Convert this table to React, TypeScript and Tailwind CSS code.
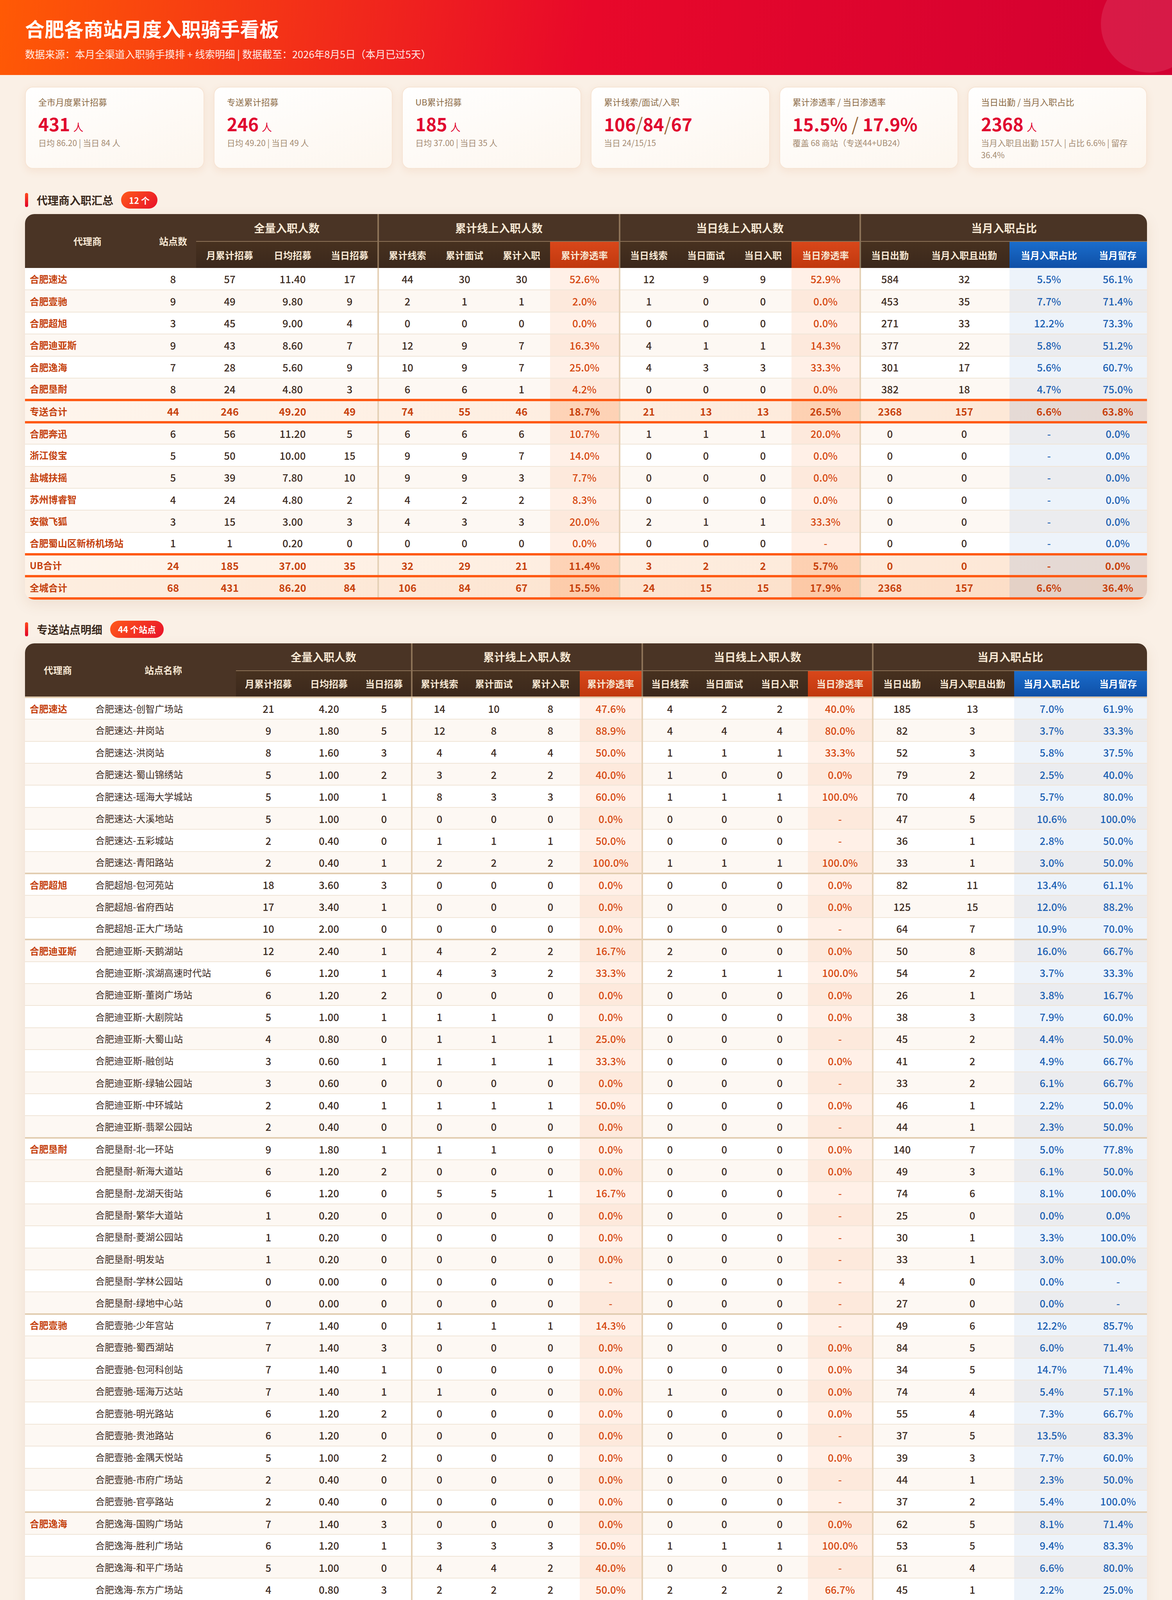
import React from "react";

type Kind = "row" | "total" | "grand";
type Row = { left: string[]; data: string[]; kind: Kind; sep?: boolean };
type LeftCol = { label: string; w: string; kind: "agency" | "site" | "num" };

const SUBS = [
  "月累计招募",
  "日均招募",
  "当日招募",
  "累计线索",
  "累计面试",
  "累计入职",
  "累计渗透率",
  "当日线索",
  "当日面试",
  "当日入职",
  "当日渗透率",
  "当日出勤",
  "当月入职且出勤",
  "当月入职占比",
  "当月留存",
];
const GROUPS: [string, number][] = [
  ["全量入职人数", 3],
  ["累计线上入职人数", 4],
  ["当日线上入职人数", 4],
  ["当月入职占比", 4],
];
const RATE = [6, 10];
const BLUE = [13, 14];
const SPLIT = [3, 7, 11];

const KPIS = [
  { label: "全市月度累计招募", value: ["431"], unit: "人", sub: "日均 86.20 | 当日 84 人" },
  { label: "专送累计招募", value: ["246"], unit: "人", sub: "日均 49.20 | 当日 49 人" },
  { label: "UB累计招募", value: ["185"], unit: "人", sub: "日均 37.00 | 当日 35 人" },
  { label: "累计线索/面试/入职", value: ["106", "/", "84", "/", "67"], unit: "", sub: "当日 24/15/15" },
  { label: "累计渗透率 / 当日渗透率", value: ["15.5%", " / ", "17.9%"], unit: "", sub: "覆盖 68 商站（专送44+UB24）" },
  { label: "当日出勤 / 当月入职占比", value: ["2368"], unit: "人", sub: "当月入职且出勤 157人 | 占比 6.6% | 留存 36.4%" },
];

const SUMMARY = [
  "合肥速达 8 57 11.40 17 44 30 30 52.6% 12 9 9 52.9% 584 32 5.5% 56.1%",
  "合肥壹驰 9 49 9.80 9 2 1 1 2.0% 1 0 0 0.0% 453 35 7.7% 71.4%",
  "合肥超旭 3 45 9.00 4 0 0 0 0.0% 0 0 0 0.0% 271 33 12.2% 73.3%",
  "合肥迪亚斯 9 43 8.60 7 12 9 7 16.3% 4 1 1 14.3% 377 22 5.8% 51.2%",
  "合肥逸海 7 28 5.60 9 10 9 7 25.0% 4 3 3 33.3% 301 17 5.6% 60.7%",
  "合肥垦耐 8 24 4.80 3 6 6 1 4.2% 0 0 0 0.0% 382 18 4.7% 75.0%",
  "T 专送合计 44 246 49.20 49 74 55 46 18.7% 21 13 13 26.5% 2368 157 6.6% 63.8%",
  "合肥奔迅 6 56 11.20 5 6 6 6 10.7% 1 1 1 20.0% 0 0 - 0.0%",
  "浙江俊宝 5 50 10.00 15 9 9 7 14.0% 0 0 0 0.0% 0 0 - 0.0%",
  "盐城扶摇 5 39 7.80 10 9 9 3 7.7% 0 0 0 0.0% 0 0 - 0.0%",
  "苏州博睿智 4 24 4.80 2 4 2 2 8.3% 0 0 0 0.0% 0 0 - 0.0%",
  "安徽飞狐 3 15 3.00 3 4 3 3 20.0% 2 1 1 33.3% 0 0 - 0.0%",
  "合肥蜀山区新桥机场站 1 1 0.20 0 0 0 0 0.0% 0 0 0 - 0 0 - 0.0%",
  "T UB合计 24 185 37.00 35 32 29 21 11.4% 3 2 2 5.7% 0 0 - 0.0%",
  "G 全城合计 68 431 86.20 84 106 84 67 15.5% 24 15 15 17.9% 2368 157 6.6% 36.4%",
];

const ZS: [string, string[]][] = [
  [
    "合肥速达",
    [
      "合肥速达-创智广场站 21 4.20 5 14 10 8 47.6% 4 2 2 40.0% 185 13 7.0% 61.9%",
      "合肥速达-井岗站 9 1.80 5 12 8 8 88.9% 4 4 4 80.0% 82 3 3.7% 33.3%",
      "合肥速达-洪岗站 8 1.60 3 4 4 4 50.0% 1 1 1 33.3% 52 3 5.8% 37.5%",
      "合肥速达-蜀山锦绣站 5 1.00 2 3 2 2 40.0% 1 0 0 0.0% 79 2 2.5% 40.0%",
      "合肥速达-瑶海大学城站 5 1.00 1 8 3 3 60.0% 1 1 1 100.0% 70 4 5.7% 80.0%",
      "合肥速达-大溪地站 5 1.00 0 0 0 0 0.0% 0 0 0 - 47 5 10.6% 100.0%",
      "合肥速达-五彩城站 2 0.40 0 1 1 1 50.0% 0 0 0 - 36 1 2.8% 50.0%",
      "合肥速达-青阳路站 2 0.40 1 2 2 2 100.0% 1 1 1 100.0% 33 1 3.0% 50.0%",
    ],
  ],
  [
    "合肥超旭",
    [
      "合肥超旭-包河苑站 18 3.60 3 0 0 0 0.0% 0 0 0 0.0% 82 11 13.4% 61.1%",
      "合肥超旭-省府西站 17 3.40 1 0 0 0 0.0% 0 0 0 0.0% 125 15 12.0% 88.2%",
      "合肥超旭-正大广场站 10 2.00 0 0 0 0 0.0% 0 0 0 - 64 7 10.9% 70.0%",
    ],
  ],
  [
    "合肥迪亚斯",
    [
      "合肥迪亚斯-天鹅湖站 12 2.40 1 4 2 2 16.7% 2 0 0 0.0% 50 8 16.0% 66.7%",
      "合肥迪亚斯-滨湖高速时代站 6 1.20 1 4 3 2 33.3% 2 1 1 100.0% 54 2 3.7% 33.3%",
      "合肥迪亚斯-董岗广场站 6 1.20 2 0 0 0 0.0% 0 0 0 0.0% 26 1 3.8% 16.7%",
      "合肥迪亚斯-大剧院站 5 1.00 1 1 1 0 0.0% 0 0 0 0.0% 38 3 7.9% 60.0%",
      "合肥迪亚斯-大蜀山站 4 0.80 0 1 1 1 25.0% 0 0 0 - 45 2 4.4% 50.0%",
      "合肥迪亚斯-融创站 3 0.60 1 1 1 1 33.3% 0 0 0 0.0% 41 2 4.9% 66.7%",
      "合肥迪亚斯-绿轴公园站 3 0.60 0 0 0 0 0.0% 0 0 0 - 33 2 6.1% 66.7%",
      "合肥迪亚斯-中环城站 2 0.40 1 1 1 1 50.0% 0 0 0 0.0% 46 1 2.2% 50.0%",
      "合肥迪亚斯-翡翠公园站 2 0.40 0 0 0 0 0.0% 0 0 0 - 44 1 2.3% 50.0%",
    ],
  ],
  [
    "合肥垦耐",
    [
      "合肥垦耐-北一环站 9 1.80 1 1 1 0 0.0% 0 0 0 0.0% 140 7 5.0% 77.8%",
      "合肥垦耐-新海大道站 6 1.20 2 0 0 0 0.0% 0 0 0 0.0% 49 3 6.1% 50.0%",
      "合肥垦耐-龙湖天街站 6 1.20 0 5 5 1 16.7% 0 0 0 - 74 6 8.1% 100.0%",
      "合肥垦耐-繁华大道站 1 0.20 0 0 0 0 0.0% 0 0 0 - 25 0 0.0% 0.0%",
      "合肥垦耐-菱湖公园站 1 0.20 0 0 0 0 0.0% 0 0 0 - 30 1 3.3% 100.0%",
      "合肥垦耐-明发站 1 0.20 0 0 0 0 0.0% 0 0 0 - 33 1 3.0% 100.0%",
      "合肥垦耐-学林公园站 0 0.00 0 0 0 0 - 0 0 0 - 4 0 0.0% -",
      "合肥垦耐-绿地中心站 0 0.00 0 0 0 0 - 0 0 0 - 27 0 0.0% -",
    ],
  ],
  [
    "合肥壹驰",
    [
      "合肥壹驰-少年宫站 7 1.40 0 1 1 1 14.3% 0 0 0 - 49 6 12.2% 85.7%",
      "合肥壹驰-蜀西湖站 7 1.40 3 0 0 0 0.0% 0 0 0 0.0% 84 5 6.0% 71.4%",
      "合肥壹驰-包河科创站 7 1.40 1 0 0 0 0.0% 0 0 0 0.0% 34 5 14.7% 71.4%",
      "合肥壹驰-瑶海万达站 7 1.40 1 1 0 0 0.0% 1 0 0 0.0% 74 4 5.4% 57.1%",
      "合肥壹驰-明光路站 6 1.20 2 0 0 0 0.0% 0 0 0 0.0% 55 4 7.3% 66.7%",
      "合肥壹驰-贵池路站 6 1.20 0 0 0 0 0.0% 0 0 0 - 37 5 13.5% 83.3%",
      "合肥壹驰-金隅天悦站 5 1.00 2 0 0 0 0.0% 0 0 0 0.0% 39 3 7.7% 60.0%",
      "合肥壹驰-市府广场站 2 0.40 0 0 0 0 0.0% 0 0 0 - 44 1 2.3% 50.0%",
      "合肥壹驰-官亭路站 2 0.40 0 0 0 0 0.0% 0 0 0 - 37 2 5.4% 100.0%",
    ],
  ],
  [
    "合肥逸海",
    [
      "合肥逸海-国购广场站 7 1.40 3 0 0 0 0.0% 0 0 0 0.0% 62 5 8.1% 71.4%",
      "合肥逸海-胜利广场站 6 1.20 1 3 3 3 50.0% 1 1 1 100.0% 53 5 9.4% 83.3%",
      "合肥逸海-和平广场站 5 1.00 0 4 4 2 40.0% 0 0 0 - 61 4 6.6% 80.0%",
      "合肥逸海-东方广场站 4 0.80 3 2 2 2 50.0% 2 2 2 66.7% 45 1 2.2% 25.0%",
      "合肥逸海-中安创谷站 3 0.60 2 1 0 0 0.0% 1 0 0 0.0% 38 1 2.6% 33.3%",
      "合肥逸海-工业大学站 3 0.60 0 0 0 0 0.0% 0 0 0 - 39 1 2.6% 33.3%",
      "合肥逸海-新桥机场站 0 0.00 0 0 0 0 - 0 0 0 - 3 0 0.0% -",
    ],
  ],
];

const UB: [string, string[]][] = [
  [
    "浙江俊宝",
    [
      "合肥蜀山区正大广场站-UB 24 4.80 6 3 3 2 8.3% 0 0 0 0.0% 0 0 - 0.0%",
      "合肥蜀山区金星站-UB 12 2.40 4 3 3 2 16.7% 0 0 0 0.0% 0 0 - 0.0%",
      "合肥蜀山区天鹅湖站-UB 6 1.20 2 1 1 1 16.7% 0 0 0 0.0% 0 0 - 0.0%",
      "合肥包河区骆岗站-UB 4 0.80 2 1 1 1 25.0% 0 0 0 0.0% 0 0 - 0.0%",
      "合肥包河区绿地中心站-UB 4 0.80 1 1 1 1 25.0% 0 0 0 0.0% 0 0 - 0.0%",
    ],
  ],
  [
    "盐城扶摇",
    [
      "合肥包河区万豪广场站-UB 20 4.00 8 7 7 3 15.0% 0 0 0 0.0% 0 0 - 0.0%",
      "合肥瑶海区大学城站-UB 9 1.80 1 1 1 0 0.0% 0 0 0 0.0% 0 0 - 0.0%",
      "合肥瑶海区家天下站-UB 7 1.40 1 1 1 0 0.0% 0 0 0 0.0% 0 0 - 0.0%",
      "合肥瑶海区荣城花园站-UB 2 0.40 0 0 0 0 0.0% 0 0 0 - 0 0 - 0.0%",
      "合肥庐阳区四里河站-UB 1 0.20 0 0 0 0 0.0% 0 0 0 - 0 0 - 0.0%",
    ],
  ],
  [
    "合肥奔迅",
    [
      "合肥包河区万达广场站-UB 15 3.00 2 1 1 1 6.7% 0 0 0 0.0% 0 0 - 0.0%",
      "合肥蜀山区港汇广场站-UB 13 2.60 1 1 1 1 7.7% 1 1 1 100.0% 0 0 - 0.0%",
      "合肥包河区后街站-UB 11 2.20 1 0 0 0 0.0% 0 0 0 0.0% 0 0 - 0.0%",
      "合肥包河区合钢桥站-UB 7 1.40 1 0 0 0 0.0% 0 0 0 0.0% 0 0 - 0.0%",
      "合肥瑶海区万达广场站-UB 7 1.40 0 4 4 4 57.1% 0 0 0 - 0 0 - 0.0%",
      "合肥庐阳区步行街站-UB 3 0.60 0 0 0 0 0.0% 0 0 0 - 0 0 - 0.0%",
    ],
  ],
  [
    "安徽飞狐",
    [
      "合肥包河区万科蓝山站-UB 11 2.20 2 3 3 3 27.3% 1 1 1 50.0% 0 0 - 0.0%",
      "合肥包河区包河苑站-UB 3 0.60 0 1 0 0 0.0% 0 0 0 - 0 0 - 0.0%",
      "合肥包河区高速时代站-UB 1 0.20 1 0 0 0 0.0% 0 0 0 0.0% 0 0 - 0.0%",
    ],
  ],
  [
    "苏州博睿智",
    [
      "合肥蜀山区之心城站-UB 11 2.20 0 1 1 1 9.1% 0 0 0 - 0 0 - 0.0%",
      "合肥蜀山区井岗站-UB 8 1.60 1 1 1 1 12.5% 0 0 0 0.0% 0 0 - 0.0%",
      "合肥包河区习友路站-UB 4 0.80 1 0 0 0 0.0% 0 0 0 0.0% 0 0 - 0.0%",
      "合肥包河区汽车西站站-UB 1 0.20 0 2 0 0 0.0% 0 0 0 - 0 0 - 0.0%",
    ],
  ],
  ["合肥蜀山区新桥机场站", ["合肥蜀山区新桥机场站-UB 1 0.20 0 0 0 0 0.0% 0 0 0 - 0 0 - 0.0%"]],
];

const parseSummary = (lines: string[]): Row[] =>
  lines.map((l) => {
    const p = l.split(" ");
    let kind: Kind = "row";
    if (p[0] === "T") {
      kind = "total";
      p.shift();
    } else if (p[0] === "G") {
      kind = "grand";
      p.shift();
    }
    return { left: p.slice(0, 2), data: p.slice(2), kind };
  });

const parseDetail = (groups: [string, string[]][], total: string): Row[] => {
  const rows: Row[] = [];
  groups.forEach(([agency, sites], g) => {
    sites.forEach((s, i) => {
      const p = s.split(" ");
      rows.push({ left: [i === 0 ? agency : "", p[0]], data: p.slice(1), kind: "row", sep: g > 0 && i === 0 });
    });
  });
  const p = total.split(" ");
  rows.push({ left: [p[0], ""], data: p.slice(1), kind: "total" });
  return rows;
};

function SectionTitle({ title, badge, blue }: { title: string; badge: string; blue?: boolean }) {
  return (
    <div className="mb-[7px] flex h-[22px] items-center">
      <div className="h-[18px] w-[4px] rounded-full bg-[linear-gradient(180deg,#ff4a1c,#e0002a)]" />
      <div className="ml-[11px] text-[14px] font-bold text-[#3b2a1e]">{title}</div>
      <div
        className={`ml-[10px] flex h-[22px] items-center rounded-full px-[10px] text-[11px] font-bold text-white ${
          blue ? "bg-[linear-gradient(135deg,#2b93f3,#1262c4)]" : "bg-[linear-gradient(135deg,#ff5a1a,#e8102a)]"
        }`}
      >
        {badge}
      </div>
    </div>
  );
}

function DataTable({ cols, widths, rows, headLine }: { cols: LeftCol[]; widths: string[]; rows: Row[]; headLine?: boolean }) {
  return (
    <div className="overflow-hidden rounded-[12px] bg-white shadow-[0_6px_18px_rgba(140,80,30,0.10)]">
      <table className="w-full table-fixed border-collapse">
        <colgroup>
          {cols.map((c) => (
            <col key={c.label} className={c.w} />
          ))}
          {widths.map((w, i) => (
            <col key={i} className={w} />
          ))}
        </colgroup>
        <thead className="text-[#f7e8d4]">
          <tr className="h-[35px] bg-[#4a3425]">
            {cols.map((c) => (
              <th key={c.label} rowSpan={2} className={`text-[12px] font-bold ${headLine ? "border-b-2 border-b-[#e2cdb1]" : ""}`}>
                {c.label}
              </th>
            ))}
            {GROUPS.map(([g, n], i) => (
              <th
                key={g}
                colSpan={n}
                className={`border-b border-b-[#8c7257] text-[14px] font-bold ${i > 0 ? "border-l-2 border-l-[#8c7257]" : ""}`}
              >
                {g}
              </th>
            ))}
          </tr>
          <tr className="h-[34px] bg-[linear-gradient(180deg,#47311f,#3b281c)]">
            {SUBS.map((s, i) => (
              <th
                key={s}
                className={[
                  "whitespace-nowrap text-[12px] font-bold",
                  SPLIT.includes(i) ? "border-l-2 border-l-[#8c7257]" : "",
                  RATE.includes(i) ? "bg-[linear-gradient(180deg,#d9471a,#c0380e)]" : "",
                  BLUE.includes(i) ? "bg-[linear-gradient(180deg,#1a6dcc,#0f4fa6)] text-white" : "",
                  headLine ? "border-b-2 border-b-[#e2cdb1]" : "",
                ].join(" ")}
              >
                {s}
              </th>
            ))}
          </tr>
        </thead>
        <tbody>
          {rows.map((r, ri) => {
            const tot = r.kind !== "row";
            const rowCls =
              r.kind === "row"
                ? `${ri % 2 ? "bg-[#fdf8f3]" : "bg-white"} border-b border-b-[#f0e5d7] ${r.sep ? "border-t-2 border-t-[#e2cdb1]" : ""}`
                : r.kind === "total"
                  ? "bg-[linear-gradient(90deg,#fef5ec,#fde6d4)] border-y-[3px] border-y-[#ff5a14]"
                  : "bg-[linear-gradient(90deg,#fdeee0,#fcdcc4)] border-y-[3px] border-y-[#ff5a14]";
            return (
              <tr key={ri} className={`h-[28.2px] ${rowCls}`}>
                {r.left.map((v, ci) => {
                  const k = cols[ci].kind;
                  const cls =
                    k === "agency"
                      ? "whitespace-nowrap pl-[6px] text-left text-[12px] font-bold text-[#c5410e]"
                      : k === "site"
                        ? "whitespace-nowrap pl-[6px] text-left text-[12px] text-[#3d2b1f]"
                        : tot
                          ? "text-center text-[13px] font-semibold text-[#c8420e]"
                          : "text-center text-[13px] font-medium text-[#3d2b1f]";
                  return (
                    <td key={ci} className={cls}>
                      {v}
                    </td>
                  );
                })}
                {r.data.map((v, i) => {
                  const rate = RATE.includes(i);
                  const blue = BLUE.includes(i);
                  const color = tot
                    ? "font-semibold text-[#c8420e]"
                    : rate
                      ? "font-medium text-[#d6470f]"
                      : blue
                        ? "font-medium text-[#1b5fb3]"
                        : "font-medium text-[#3d2b1f]";
                  const bg = rate
                    ? tot
                      ? "bg-[#ff6a10]/20"
                      : "bg-[#ff6a10]/10"
                    : blue
                      ? tot
                        ? "bg-[#1565c0]/10"
                        : "bg-[#1565c0]/[0.08]"
                      : "";
                  return (
                    <td
                      key={i}
                      className={`text-center text-[13px] ${color} ${bg} ${SPLIT.includes(i) ? "border-l-2 border-l-[#e5d1b6]" : ""}`}
                    >
                      {v}
                    </td>
                  );
                })}
              </tr>
            );
          })}
        </tbody>
      </table>
    </div>
  );
}

export default function App() {
  return (
    <div className="[zoom:2]">
      <div className="min-h-[3098px] w-[1500px] bg-[#faf0e6] pb-[44px] font-['Noto_Sans_CJK_SC','Noto_Sans',sans-serif]">
        <header className="relative h-[96px] overflow-hidden bg-[linear-gradient(100deg,#ff5a05_0%,#e8082a_50%,#d20032_100%)] px-8 pt-[19px]">
          <div className="absolute right-[-34px] top-[-32px] h-[125px] w-[125px] rounded-full bg-white/10" />
          <h1 className="text-[25px] font-bold leading-[34px] text-white">合肥各商站月度入职骑手看板</h1>
          <p className="mt-[6px] text-[12.8px] leading-[20px] text-white/90">
            数据来源：本月全渠道入职骑手摸排 + 线索明细 | 数据截至：2026年8月5日（本月已过5天）
          </p>
        </header>

        <div className="px-8">
          <div className="mt-[15px] grid grid-cols-6 gap-3">
            {KPIS.map((k) => (
              <div
                key={k.label}
                className="rounded-[10px] border border-[#f6e4d4] bg-[linear-gradient(160deg,#ffffff,#fdf6ee)] px-4 pb-[9px] pt-[10px] shadow-[0_3px_10px_rgba(210,130,70,0.12)]"
              >
                <div className="text-[11px] leading-[16px] text-[#8b6a45]">{k.label}</div>
                <div className="mt-[7px] h-[26px] whitespace-nowrap text-[23px] font-bold leading-[26px] text-[#e0062f]">
                  {k.value.map((v, i) =>
                    v.includes("/") ? (
                      <span key={i} className="whitespace-pre font-normal leading-none text-[#9c6b3c]">
                        {v}
                      </span>
                    ) : (
                      <span key={i} className="leading-none">
                        {v}
                      </span>
                    ),
                  )}
                  {k.unit && <span className="ml-[4px] text-[13px] font-normal leading-none">{k.unit}</span>}
                </div>
                <div className="mt-[4px] text-[10.5px] leading-[15.5px] text-[#a58b72]">{k.sub}</div>
              </div>
            ))}
          </div>

          <section className="mt-[29px]">
            <SectionTitle title="代理商入职汇总" badge="12 个" />
            <DataTable
              cols={[
                { label: "代理商", w: "w-[160px]", kind: "agency" },
                { label: "站点数", w: "w-[59px]", kind: "num" },
              ]}
              widths={[
                "w-[86px]",
                "w-[75px]",
                "w-[72px]",
                "w-[74px]",
                "w-[73px]",
                "w-[73px]",
                "w-[89px]",
                "w-[74px]",
                "w-[73px]",
                "w-[73px]",
                "w-[88px]",
                "w-[75px]",
                "w-[116px]",
                "w-[101px]",
                "w-[75px]",
              ]}
              rows={parseSummary(SUMMARY)}
            />
          </section>

          <section className="mt-[27px]">
            <SectionTitle title="专送站点明细" badge="44 个站点" />
            <DataTable
              headLine
              cols={[
                { label: "代理商", w: "w-[84px]", kind: "agency" },
                { label: "站点名称", w: "w-[186px]", kind: "site" },
              ]}
              widths={[
                "w-[83px]",
                "w-[72px]",
                "w-[70px]",
                "w-[70px]",
                "w-[70px]",
                "w-[75px]",
                "w-[80px]",
                "w-[70px]",
                "w-[70px]",
                "w-[72px]",
                "w-[83px]",
                "w-[74px]",
                "w-[107px]",
                "w-[96px]",
                "w-[74px]",
              ]}
              rows={parseDetail(ZS, "专送合计 246 49.20 49 74 55 46 18.7% 21 13 13 26.5% 2368 157 6.6% 63.8%")}
            />
          </section>

          <section className="mt-[27px]">
            <SectionTitle title="UB站点明细" badge="24 个站点" blue />
            <DataTable
              headLine
              cols={[
                { label: "代理商", w: "w-[146px]", kind: "agency" },
                { label: "站点名称", w: "w-[172px]", kind: "site" },
              ]}
              widths={[
                "w-[79px]",
                "w-[69px]",
                "w-[67px]",
                "w-[69px]",
                "w-[66px]",
                "w-[66px]",
                "w-[82px]",
                "w-[69px]",
                "w-[66px]",
                "w-[66px]",
                "w-[81px]",
                "w-[72px]",
                "w-[104px]",
                "w-[93px]",
                "w-[69px]",
              ]}
              rows={parseDetail(UB, "UB合计 185 37.00 35 32 29 21 11.4% 3 2 2 5.7% 0 0 - 0.0%")}
            />
          </section>

          <p className="mt-[22px] text-center text-[11px] leading-[15px] tracking-[-0.08px] text-[#9b7b58]">
            计算口径：招募数据 = 入职骑手摸排去重骑手ID | 线索数据 = 线索明细去重 | 日均 = 月度累计 ÷ 5天 | 累计渗透率 = 累计线上入职 ÷ 月累计招募 |
            当日渗透率 = 当日线上入职 ÷ 当日招募 | 当日出勤 = 专送+UB完单&gt;0 | 当月入职占比 = 当月入职且出勤 ÷ 当日出勤 | 当月留存 = 当月入职且出勤 ÷
            月累计招募
          </p>
        </div>
      </div>
    </div>
  );
}
